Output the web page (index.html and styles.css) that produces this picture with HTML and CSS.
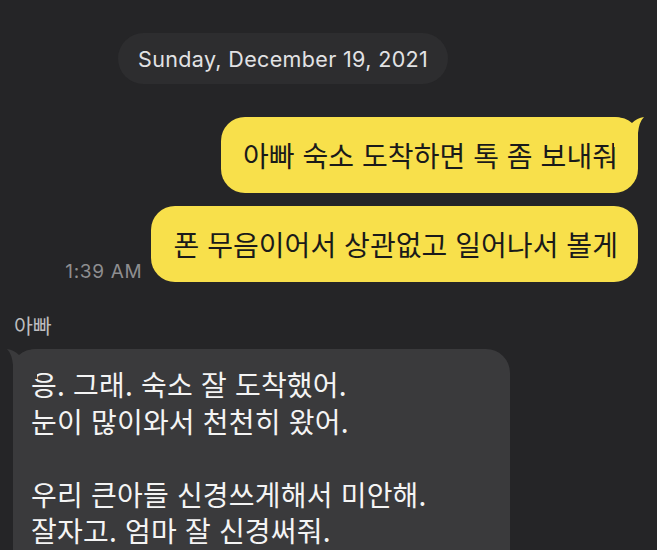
FILE: index.html
```html
<!DOCTYPE html>
<html lang="ko">
<head>
    <meta charset="UTF-8">
    <meta name="viewport" content="width=device-width, initial-scale=1.0">
    <title>채팅</title>
    <link rel="stylesheet" href="styles.css">
</head>
<body>
    <div class="chat">
        <div class="date-pill">Sunday, December 19, 2021</div>

        <div class="row-me first">
            <div class="bubble-me with-tail">
                아빠 숙소 도착하면 톡 좀 보내줘
                <svg class="tail-me" width="30" height="30" viewBox="0 0 30 30">
                    <path d="M0 0 Q12 0 18 6 Q23 1 30 0 Q25 5 24 16 L24 30 L0 30 Z" fill="#f8e04b"/>
                </svg>
            </div>
        </div>

        <div class="row-me">
            <span class="time">1:39 AM</span>
            <div class="bubble-me">폰 무음이어서 상관없고 일어나서 볼게</div>
        </div>

        <div class="sender">아빠</div>
        <div class="bubble-other">
            응. 그래. 숙소 잘 도착했어.<br>
            눈이 많이와서 천천히 왔어.<br>
            <br>
            우리 큰아들 신경쓰게해서 미안해.<br>
            잘자고. 엄마 잘 신경써줘.
            <svg class="tail-other" width="30" height="30" viewBox="0 0 30 30">
                <path d="M30 0 Q18 0 12 6 Q7 1 0 0 Q5 5 6 16 L6 30 L30 30 Z" fill="#3a3a3c"/>
            </svg>
        </div>
    </div>
</body>
</html>
```

FILE: styles.css
```css
body {
    margin: 0;
    padding: 0;
    background-color: #252527;
    font-family: "Noto Sans CJK KR", "Noto Sans", sans-serif;
    overflow: hidden;
}

.chat {
    display: flex;
    flex-direction: column;
    padding: 33px 19px 0 13px;
    height: 550px;
    box-sizing: border-box;
    overflow: hidden; /* 아래로 잘린 화면 */
}

.chat > * {
    flex-shrink: 0; /* 넘쳐도 줄어들지 않게 */
}

/* 날짜 */
.date-pill {
    align-self: flex-start;
    margin-left: 105px;
    height: 51px;
    padding: 0 20px;
    display: flex;
    align-items: center;
    border-radius: 26px;
    background-color: #2d2d2f;
    color: #e2e2e4;
    font-family: Inter, "Noto Sans", sans-serif;
    font-size: 21.5px;
    letter-spacing: 0.35px;
}

/* 내 메시지 */
.row-me {
    display: flex;
    justify-content: flex-end;
    align-items: flex-end;
    margin-top: 13px;
}
.row-me.first {
    margin-top: 33px;
}

.bubble-me {
    position: relative;
    background-color: #f8e04b;
    color: #1a1a1a;
    font-size: 28px;
    letter-spacing: 0.05px;
    height: 76px;
    display: flex;
    align-items: center;
    padding: 0 20px 0 22px;
    border-radius: 24px;
    box-sizing: border-box;
}

.tail-me {
    position: absolute;
    top: 0;
    right: -6px;
}

.time {
    color: #8e8e90;
    font-family: Inter, "Noto Sans", sans-serif;
    font-size: 19px;
    letter-spacing: 0.7px;
    margin-right: 9px;
    margin-bottom: -1px;
}

/* 상대 메시지 */
.sender {
    color: #bdbdbf;
    font-size: 20.5px;
    line-height: 30px;
    margin-top: 28px;
    margin-left: 1px;
}

.bubble-other {
    position: relative;
    align-self: flex-start;
    width: 497px;
    box-sizing: border-box;
    margin-top: 9px;
    background-color: #3a3a3c;
    color: #f4f4f4;
    font-size: 28px;
    letter-spacing: 0.2px;
    line-height: 36.5px;
    padding: 17px 18px 30px 18px;
    border-radius: 24px;
}

.tail-other {
    position: absolute;
    top: 0;
    left: -6px;
}
```
